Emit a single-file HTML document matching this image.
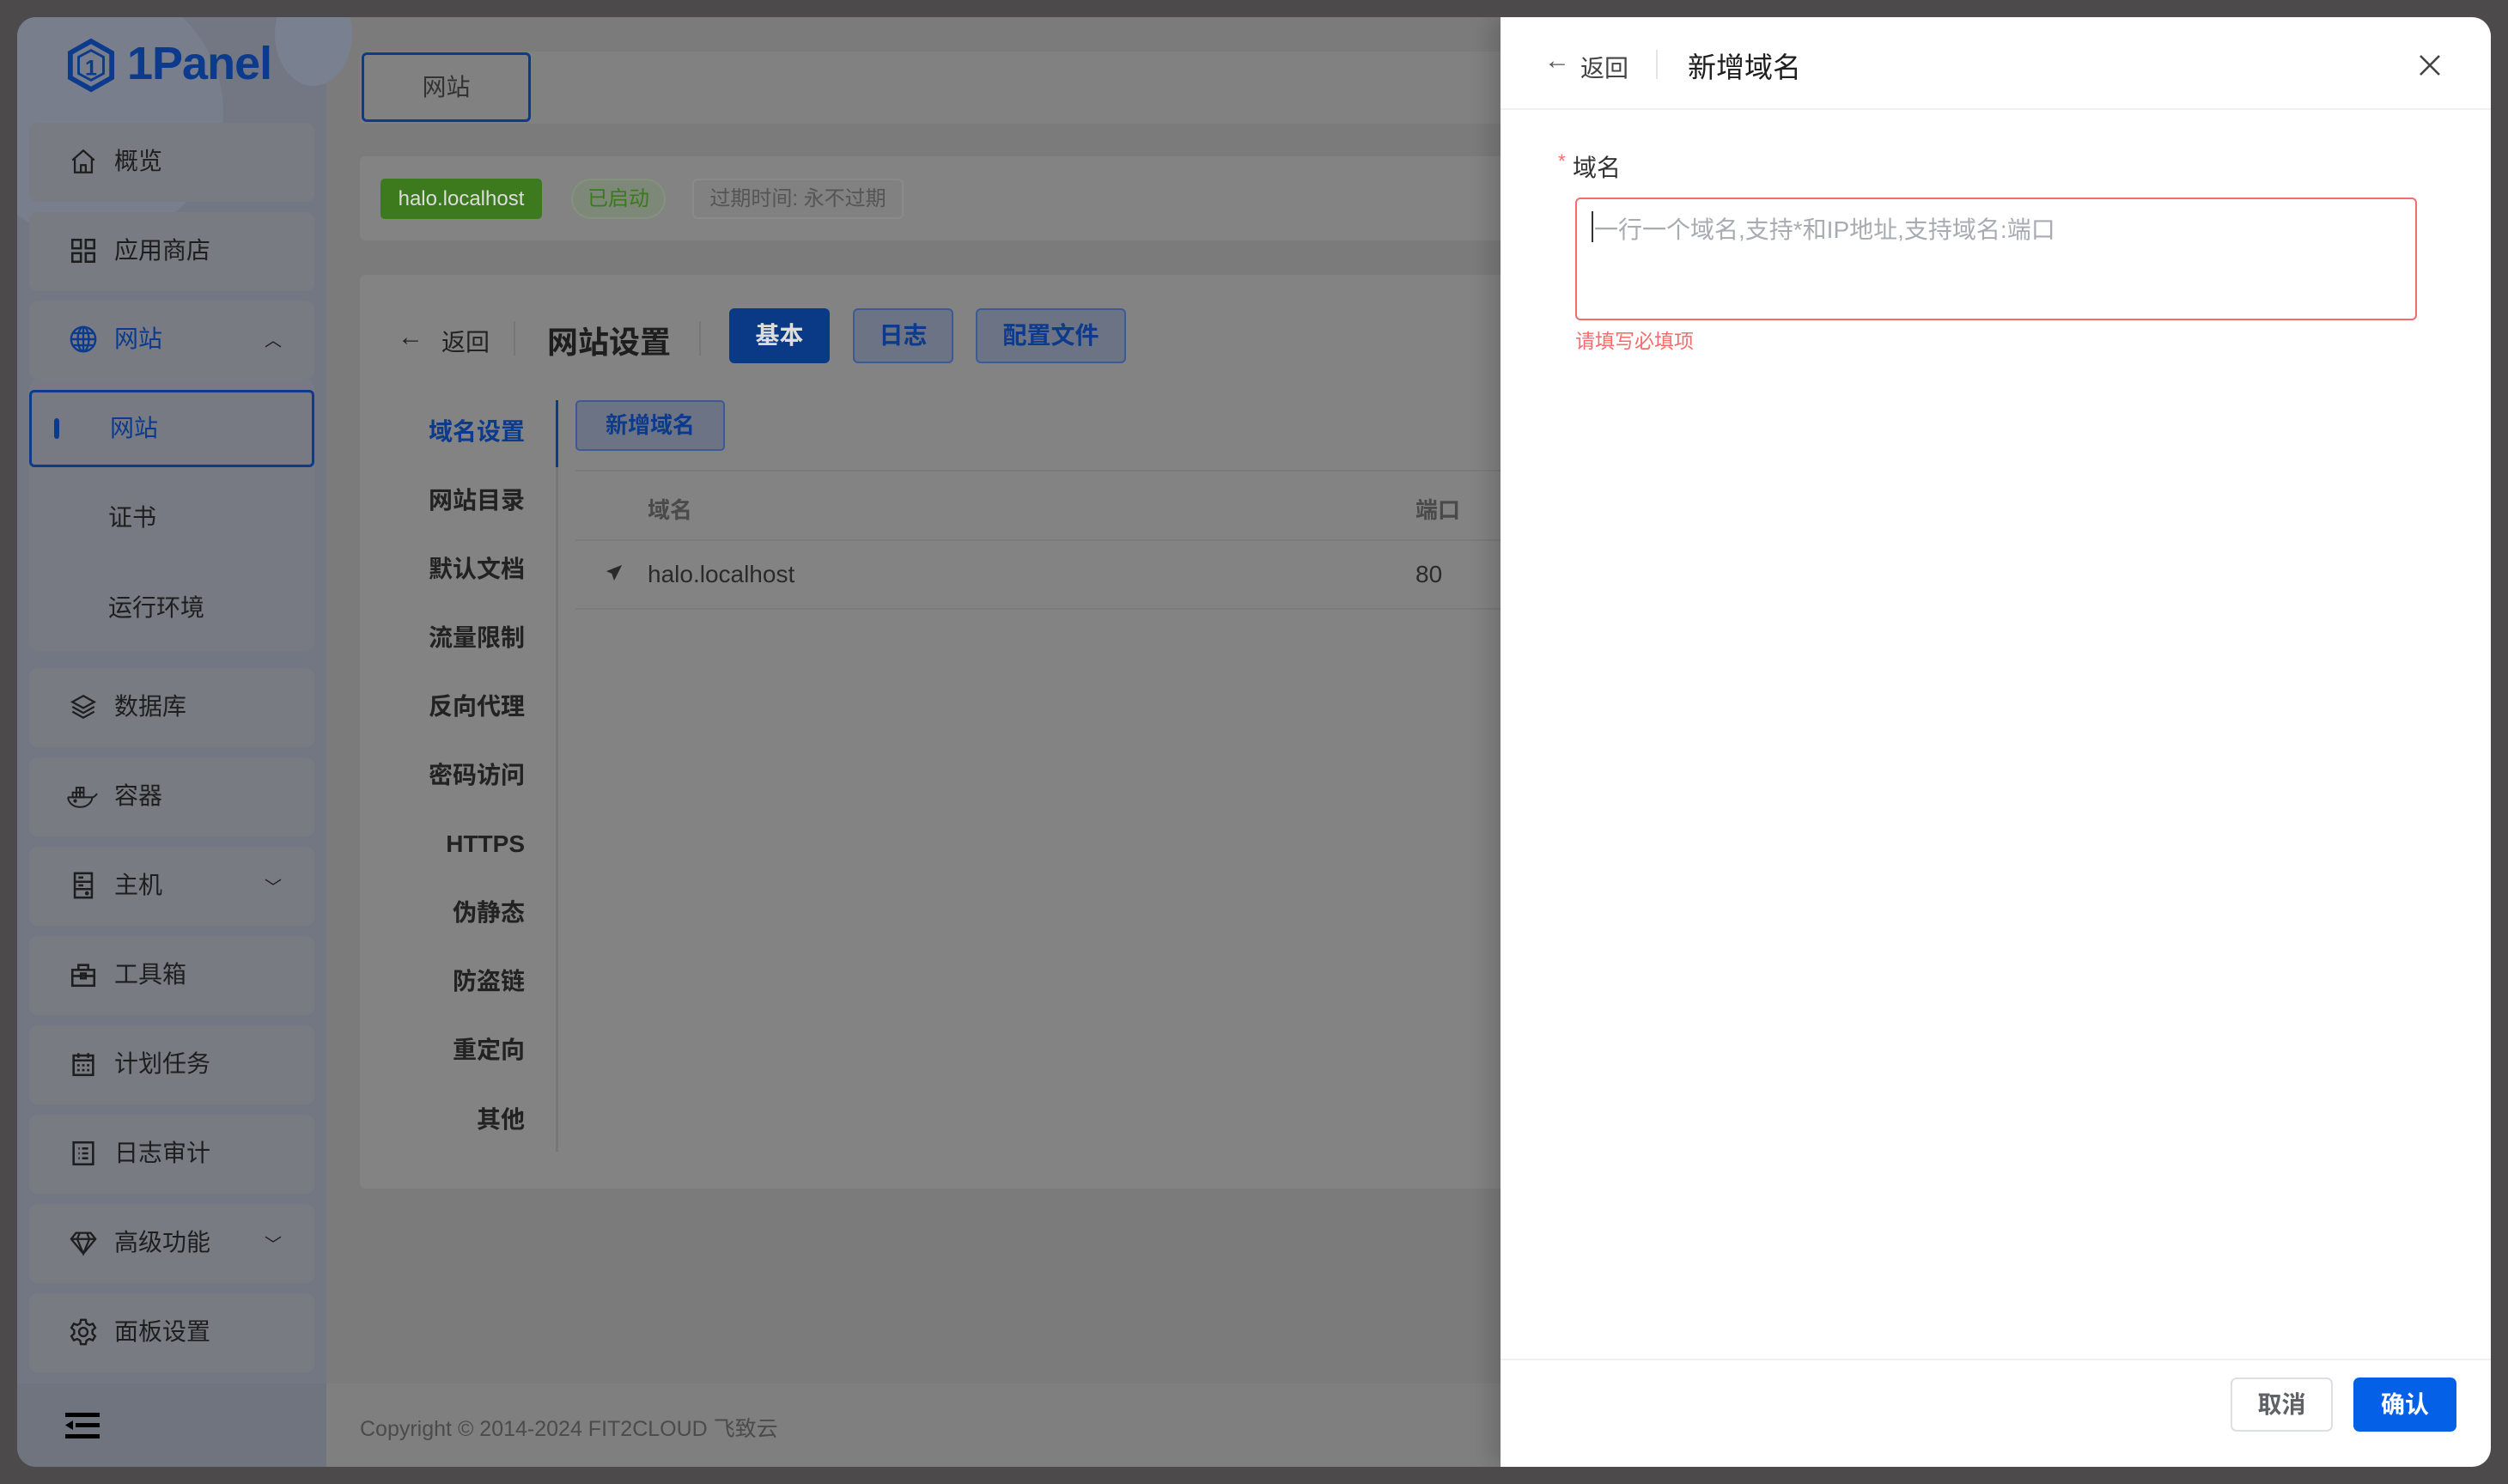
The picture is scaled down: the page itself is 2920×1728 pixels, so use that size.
<!DOCTYPE html>
<html><head><meta charset="utf-8"><style>
*{margin:0;padding:0;box-sizing:border-box}
body{width:2920px;height:1728px;background:#4c4a4b;position:relative;overflow:hidden;font-family:"Liberation Sans","Noto Sans CJK SC",sans-serif}
.a{position:absolute}
#win{left:20px;top:20px;width:2880px;height:1688px;border-radius:22px;overflow:hidden;background:#7b7b7b}
#side{left:0;top:0;width:360px;height:1688px;background:#737783}
.card{position:absolute;left:14px;width:332px;height:92px;background:#797b83;border-radius:10px}
.mi{position:absolute;left:113px;font-size:28px;color:#1e1e1e;line-height:1}
.ic{position:absolute;left:60px;width:34px;height:34px}
.chev{position:absolute;left:288px;font-size:20px;color:#1e1e1e}
.nav{position:absolute;right:0;width:200px;text-align:right;font-size:28px;font-weight:bold;color:#222;line-height:1}
</style></head><body>
<div id="win" class="a">
 <div id="side" class="a">
  <div class="a" style="left:-60px;top:-40px;width:300px;height:300px;border-radius:50%;background:#787e8c"></div>
  <div class="a" style="left:300px;top:-40px;width:90px;height:120px;border-radius:50%;background:#79808f"></div>
  <svg class="a" style="left:58px;top:24px" width="56" height="64" viewBox="0 0 58 64"><path d="M29 3 L54 17 L54 47 L29 61 L4 47 L4 17 Z" fill="none" stroke="#0c3a8c" stroke-width="6"/><path d="M29 14 L44 22 L44 42 L29 50 L14 42 L14 22Z" fill="none" stroke="#0c3a8c" stroke-width="3"/><text x="29" y="44" font-size="26" font-weight="bold" fill="#0c3a8c" text-anchor="middle" font-family="Liberation Sans">1</text></svg>
  <div class="a" style="left:128px;top:23px;font-size:54px;font-weight:bold;color:#0c3a8c;letter-spacing:-1px">1Panel</div>

  <div class="card" style="top:123px"></div>
  <svg class="ic" style="top:151px" viewBox="0 0 24 24" fill="none" stroke="#1e1e1e" stroke-width="1.6"><path d="M3 11 L12 3 L21 11 M5 9 V21 H19 V9 M10 21 V15 H14 V21"/></svg>
  <div class="mi" style="top:154px">概览</div>

  <div class="card" style="top:227px"></div>
  <svg class="ic" style="top:255px" viewBox="0 0 24 24" fill="none" stroke="#1e1e1e" stroke-width="1.8"><rect x="3" y="3" width="7" height="7"/><rect x="14" y="3" width="7" height="7"/><rect x="3" y="14" width="7" height="7"/><rect x="14" y="14" width="7" height="7"/></svg>
  <div class="mi" style="top:258px">应用商店</div>

  <div class="card" style="top:330px"></div>
  <svg class="ic" style="top:358px" viewBox="0 0 24 24" fill="none" stroke="#0c3a8c" stroke-width="1.7"><circle cx="12" cy="12" r="10"/><ellipse cx="12" cy="12" rx="4.5" ry="10"/><path d="M2 12H22M4 7H20M4 17H20M12 2V22"/></svg>
  <div class="mi" style="top:361px;color:#0c3a8c">网站</div>
  <div class="chev" style="top:360px">︿</div>

  <div class="a" style="left:14px;top:422px;width:332px;height:316px;background:#777983;border-radius:10px"></div>
  <div class="a" style="left:14px;top:434px;width:332px;height:90px;border:3px solid #0c3a8c;border-radius:6px"></div>
  <div class="a" style="left:43px;top:467px;width:6px;height:24px;background:#0c3a8c;border-radius:3px"></div>
  <div class="mi" style="left:108px;top:465px;color:#0c3a8c">网站</div>
  <div class="mi" style="left:106px;top:569px">证书</div>
  <div class="mi" style="left:106px;top:674px">运行环境</div>

  <div class="card" style="top:758px"></div>
  <svg class="ic" style="top:786px" viewBox="0 0 24 24" fill="none" stroke="#1e1e1e" stroke-width="1.6"><path d="M12 3 L21 8 L12 13 L3 8Z M3 12 L12 17 L21 12 M3 16 L12 21 L21 16"/></svg>
  <div class="mi" style="top:789px">数据库</div>

  <div class="card" style="top:862px"></div>
  <svg class="ic" style="top:890px;width:40px;left:56px" viewBox="0 0 28 24" fill="none" stroke="#1e1e1e" stroke-width="1.4"><path d="M2 13 H22 C24 13 25 11 26 10 M2 13 C3 19 8 21 12 21 C18 21 22 17 22 13"/><rect x="6" y="9" width="3" height="4"/><rect x="9" y="9" width="3" height="4"/><rect x="12" y="9" width="3" height="4"/><rect x="9" y="5" width="3" height="4"/><rect x="12" y="5" width="3" height="4"/><circle cx="8" cy="16" r=".8"/></svg>
  <div class="mi" style="top:893px">容器</div>

  <div class="card" style="top:966px"></div>
  <svg class="ic" style="top:994px" viewBox="0 0 24 24" fill="none" stroke="#1e1e1e" stroke-width="1.8"><rect x="5" y="2" width="14" height="20"/><path d="M5 9H19M5 15H19M8 5.5H12M8 12H12"/><circle cx="15" cy="18.5" r=".8" fill="#1e1e1e"/></svg>
  <div class="mi" style="top:997px">主机</div>
  <div class="chev" style="top:997px">﹀</div>

  <div class="card" style="top:1070px"></div>
  <svg class="ic" style="top:1098px" viewBox="0 0 24 24" fill="none" stroke="#1e1e1e" stroke-width="1.8"><rect x="3" y="8" width="18" height="13"/><path d="M8 8V4H16V8M3 13H21M10 11H14V15H10Z"/></svg>
  <div class="mi" style="top:1101px">工具箱</div>

  <div class="card" style="top:1174px"></div>
  <svg class="ic" style="top:1202px" viewBox="0 0 24 24" fill="none" stroke="#1e1e1e" stroke-width="1.8"><rect x="4" y="5" width="16" height="16"/><path d="M4 9H20M8 3V7M16 3V7M7 13H9M11 13H13M15 13H17M7 17H9M11 17H13M15 17H17"/></svg>
  <div class="mi" style="top:1205px">计划任务</div>

  <div class="card" style="top:1278px"></div>
  <svg class="ic" style="top:1306px" viewBox="0 0 24 24" fill="none" stroke="#1e1e1e" stroke-width="1.8"><rect x="4" y="3" width="16" height="18"/><path d="M8 8H9M11 8H16M8 12H9M11 12H16M8 16H9M11 16H16"/></svg>
  <div class="mi" style="top:1309px">日志审计</div>

  <div class="card" style="top:1382px"></div>
  <svg class="ic" style="top:1410px" viewBox="0 0 24 24" fill="none" stroke="#1e1e1e" stroke-width="1.6"><path d="M2 9 L6 4 H18 L22 9 L12 21Z M2 9H22 M9 4 L7 9 L12 21 L17 9 L15 4"/></svg>
  <div class="mi" style="top:1413px">高级功能</div>
  <div class="chev" style="top:1413px">﹀</div>

  <div class="card" style="top:1486px"></div>
  <svg class="ic" style="top:1514px" viewBox="0 0 24 24" fill="none" stroke="#1e1e1e" stroke-width="1.7"><circle cx="12" cy="12" r="3.5"/><path d="M10 2H14L14.6 5 L17 6.3 L19.8 5.2 L21.8 8.6 L19.5 10.6 V13.4 L21.8 15.4 L19.8 18.8 L17 17.7 L14.6 19 L14 22H10L9.4 19 L7 17.7 L4.2 18.8 L2.2 15.4 L4.5 13.4 V10.6 L2.2 8.6 L4.2 5.2 L7 6.3 L9.4 5Z"/></svg>
  <div class="mi" style="top:1517px">面板设置</div>

  <div class="a" style="left:0;top:1591px;width:360px;height:97px;background:#70747f"></div>
  <svg class="a" style="left:56px;top:1625px" width="40" height="30" viewBox="0 0 40 30"><rect x="0" y="0" width="40" height="5" fill="#000"/><rect x="12" y="12" width="28" height="5" fill="#000"/><rect x="0" y="25" width="40" height="5" fill="#000"/><path d="M0 14.5 L9 9 V20Z" fill="#000"/></svg>
 </div>

 <!-- main -->
 <div class="a" style="left:399px;top:40px;width:1400px;height:84px;background:#818181;border-radius:6px"></div>
 <div class="a" style="left:401px;top:41px;width:197px;height:81px;border:3px solid #0c3a8c;border-radius:6px;font-size:28px;color:#333;text-align:center;line-height:75px">网站</div>

 <div class="a" style="left:399px;top:162px;width:1400px;height:98px;background:#838383;border-radius:6px"></div>
 <div class="a" style="left:423px;top:188px;width:188px;height:47px;background:#3d7a1e;border-radius:5px;font-size:24px;color:#ddd;text-align:center;line-height:47px">halo.localhost</div>
 <div class="a" style="left:645px;top:188px;width:110px;height:47px;background:#7d8878;border:2px solid #85907f;border-radius:24px;font-size:24px;color:#3b7a1c;text-align:center;line-height:43px">已启动</div>
 <div class="a" style="left:786px;top:188px;width:246px;height:47px;background:#818181;border:2px solid #8a8a8a;border-radius:6px;font-size:24px;color:#555;text-align:center;line-height:43px">过期时间: 永不过期</div>

 <div class="a" style="left:399px;top:300px;width:1400px;height:1064px;background:#838383;border-radius:6px"></div>
 <div class="a" style="left:443px;top:356px;font-size:30px;color:#222">←</div>
 <div class="a" style="left:494px;top:357px;font-size:28px;color:#222">返回</div>
 <div class="a" style="left:578px;top:354px;width:2px;height:40px;background:#777"></div>
 <div class="a" style="left:617px;top:350px;font-size:36px;font-weight:bold;color:#1e1e1e">网站设置</div>
 <div class="a" style="left:794px;top:354px;width:2px;height:40px;background:#777"></div>
 <div class="a" style="left:829px;top:339px;width:117px;height:64px;background:#0a3985;border-radius:6px;font-size:28px;font-weight:bold;color:#ddd;text-align:center;line-height:64px">基本</div>
 <div class="a" style="left:973px;top:339px;width:117px;height:64px;background:#6b7384;border:2px solid #3d5a94;border-radius:6px;font-size:28px;font-weight:bold;color:#0c3a8c;text-align:center;line-height:60px">日志</div>
 <div class="a" style="left:1116px;top:339px;width:175px;height:64px;background:#6b7384;border:2px solid #3d5a94;border-radius:6px;font-size:28px;font-weight:bold;color:#0c3a8c;text-align:center;line-height:60px">配置文件</div>

 <div class="a" style="left:370px;top:0;width:221px;height:1400px">
  <div class="nav" style="top:469px;color:#0c3a8c">域名设置</div>
  <div class="nav" style="top:549px">网站目录</div>
  <div class="nav" style="top:629px">默认文档</div>
  <div class="nav" style="top:709px">流量限制</div>
  <div class="nav" style="top:789px">反向代理</div>
  <div class="nav" style="top:869px">密码访问</div>
  <div class="nav" style="top:949px">HTTPS</div>
  <div class="nav" style="top:1029px">伪静态</div>
  <div class="nav" style="top:1109px">防盗链</div>
  <div class="nav" style="top:1189px">重定向</div>
  <div class="nav" style="top:1270px">其他</div>
 </div>
 <div class="a" style="left:627px;top:446px;width:3px;height:875px;background:#777"></div>
 <div class="a" style="left:627px;top:446px;width:3px;height:78px;background:#0c3a8c"></div>
 <div class="a" style="left:650px;top:446px;width:174px;height:59px;background:#6b7384;border:2px solid #3d5a94;border-radius:5px;font-size:26px;font-weight:bold;color:#0c3a8c;text-align:center;line-height:55px">新增域名</div>
 <div class="a" style="left:650px;top:527px;width:1100px;height:2px;background:#7a7a7a"></div>
 <div class="a" style="left:734px;top:554px;font-size:26px;font-weight:bold;color:#4a4a4a">域名</div>
 <div class="a" style="left:1628px;top:554px;font-size:26px;font-weight:bold;color:#4a4a4a">端口</div>
 <div class="a" style="left:650px;top:608px;width:1100px;height:2px;background:#7a7a7a"></div>
 <svg class="a" style="left:684px;top:636px" width="22" height="22" viewBox="0 0 24 24"><path d="M22 2 L2 10 L9 13 L12 22Z" fill="#2a2a2a"/></svg>
 <div class="a" style="left:734px;top:633px;font-size:28px;color:#2a2a2a">halo.localhost</div>
 <div class="a" style="left:1628px;top:633px;font-size:28px;color:#2a2a2a">80</div>
 <div class="a" style="left:650px;top:688px;width:1100px;height:2px;background:#7a7a7a"></div>

 <div class="a" style="left:360px;top:1591px;width:1400px;height:97px;background:#7f7f7f"></div>
 <div class="a" style="left:399px;top:1624px;font-size:25px;color:#4b4b4b">Copyright © 2014-2024 FIT2CLOUD 飞致云</div>

 <!-- drawer -->
 <div class="a" style="left:1727px;top:0;width:1153px;height:1688px;background:#fff;box-shadow:-12px 0 24px rgba(0,0,0,0.15)">
  <div class="a" style="left:0;top:106px;width:1153px;height:2px;background:#eef0f3"></div>
  <div class="a" style="left:51px;top:34px;font-size:30px;color:#555">←</div>
  <div class="a" style="left:93px;top:38px;font-size:28px;color:#444">返回</div>
  <div class="a" style="left:181px;top:38px;width:2px;height:34px;background:#e4e4e4"></div>
  <div class="a" style="left:218px;top:32px;font-size:33px;color:#1f1f1f">新增域名</div>
  <svg class="a" style="left:1068px;top:42px" width="28" height="28" viewBox="0 0 28 28"><path d="M3 3L25 25M25 3L3 25" stroke="#444" stroke-width="2.6"/></svg>
  <div class="a" style="left:67px;top:155px;font-size:22px;color:#f56c6c">*</div>
  <div class="a" style="left:84px;top:154px;font-size:28px;color:#333">域名</div>
  <div class="a" style="left:87px;top:210px;width:980px;height:143px;border:2px solid #f56c6c;border-radius:6px"></div>
  <div class="a" style="left:106px;top:226px;width:2px;height:36px;background:#333"></div>
  <div class="a" style="left:109px;top:226px;font-size:28px;color:#a8abb2">一行一个域名,支持*和IP地址,支持域名:端口</div>
  <div class="a" style="left:87px;top:358px;font-size:23px;color:#f56c6c">请填写必填项</div>
  <div class="a" style="left:0;top:1562px;width:1153px;height:2px;background:#eef0f3"></div>
  <div class="a" style="left:850px;top:1584px;width:119px;height:63px;border:2px solid #dcdfe6;border-radius:7px;font-size:28px;font-weight:bold;color:#606266;text-align:center;line-height:59px">取消</div>
  <div class="a" style="left:993px;top:1584px;width:120px;height:63px;background:#0560e8;border-radius:7px;font-size:28px;font-weight:bold;color:#fff;text-align:center;line-height:63px">确认</div>
 </div>
</div>
</body></html>
